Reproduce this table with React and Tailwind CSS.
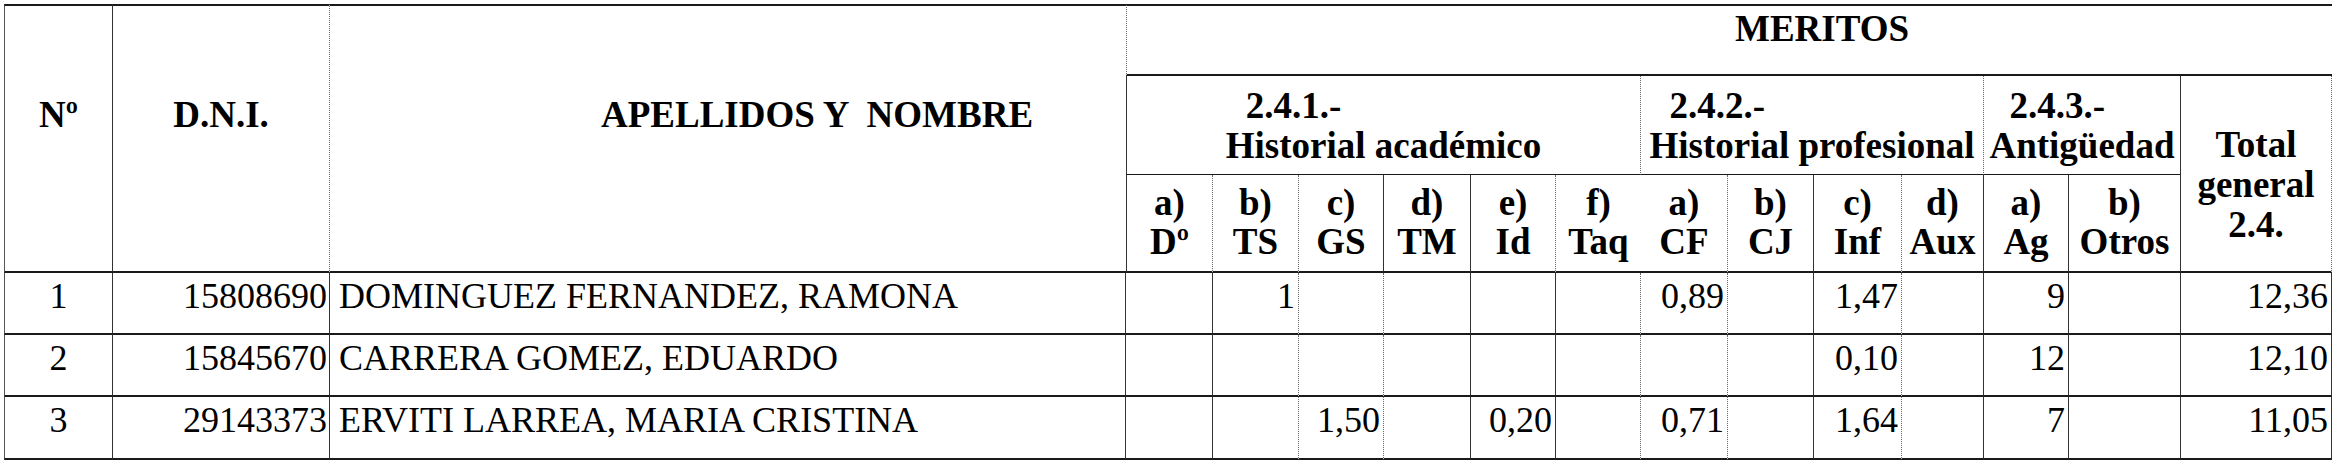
import React from "react";

const R_SOLID = "border-r border-r-[#333]";
const R_DOT = "border-r border-r-[#666] [border-right-style:dotted]";
const B_SOLID = "border-b-2 border-b-[#1a1a1a]";
const T_SOLID = "border-t-2 border-t-[#1a1a1a]";

const subHeads = [
  ["a)", "Dº", R_DOT],
  ["b)", "TS", R_DOT],
  ["c)", "GS", R_SOLID],
  ["d)", "TM", R_SOLID],
  ["e)", "Id", R_DOT],
  ["f)", "Taq", ""],
  ["a)", "CF", R_DOT],
  ["b)", "CJ", R_SOLID],
  ["c)", "Inf", R_DOT],
  ["d)", "Aux", R_SOLID],
  ["a)", "Ag", R_SOLID],
  ["b)", "Otros", R_SOLID],
];

const rowBorders = [
  R_SOLID,
  R_DOT,
  R_DOT,
  R_SOLID,
  R_SOLID,
  R_DOT,
  R_DOT,
  R_SOLID,
  R_DOT,
  R_SOLID,
  R_SOLID,
  R_SOLID,
  R_SOLID,
];

const rows = [
  {
    n: "1",
    dni: "15808690",
    name: "DOMINGUEZ FERNANDEZ, RAMONA",
    v: ["", "1", "", "", "", "", "0,89", "", "1,47", "", "9", "", "12,36"],
  },
  {
    n: "2",
    dni: "15845670",
    name: "CARRERA GOMEZ, EDUARDO",
    v: ["", "", "", "", "", "", "", "", "0,10", "", "12", "", "12,10"],
  },
  {
    n: "3",
    dni: "29143373",
    name: "ERVITI LARREA, MARIA CRISTINA",
    v: ["", "", "1,50", "", "0,20", "", "0,71", "", "1,64", "", "7", "", "11,05"],
  },
];

function GroupHead({ code, title }) {
  return (
    <div className="inline-block text-left leading-[40px]">
      <div className="pl-[20px]">{code}</div>
      <div className="whitespace-nowrap">{title}</div>
    </div>
  );
}

export default function App() {
  return (
    <div className="w-[2334px] h-[462px] bg-white text-black overflow-hidden font-['Liberation_Serif','Times_New_Roman',serif]">
      <div className="pt-[4px] pl-[4px]">
        <div className="grid grid-cols-[109px_217px_796px_87px_86px_85px_87px_85px_85px_87px_86px_88px_82px_85px_112px_151px] grid-rows-[72px_99px_98px_62px_62px_63px]">
          <div className={`col-[1/2] row-[1/4] ${T_SOLID} ${B_SOLID} border-l border-l-[#555] ${R_SOLID} flex justify-center pt-[90px] font-bold text-[37px] leading-none`}>
            Nº
          </div>
          <div className={`col-[2/3] row-[1/4] ${T_SOLID} ${B_SOLID} ${R_DOT} flex justify-center pt-[90px] font-bold text-[37px] leading-none`}>
            D.N.I.
          </div>
          <div className={`col-[3/4] row-[1/4] ${T_SOLID} ${B_SOLID} pl-[271px] pt-[90px] font-bold text-[37px] leading-none whitespace-pre`}>
            {"APELLIDOS Y  NOMBRE"}
          </div>
          <div className={`col-[4/17] row-[1/2] ${T_SOLID} ${B_SOLID} border-l border-l-[#666] [border-left-style:dotted] pl-[608px] pt-[4px] font-bold text-[37px] leading-none`}>
            MERITOS
          </div>
          <div className={`col-[4/10] row-[2/3] border-l border-l-[#333] ${R_DOT} border-b border-b-[#1a1a1a] flex justify-center pt-[10px] font-bold text-[37px]`}>
            <GroupHead code="2.4.1.-" title="Historial académico" />
          </div>
          <div className={`col-[10/14] row-[2/3] ${R_DOT} border-b border-b-[#1a1a1a] flex justify-center pt-[10px] font-bold text-[37px]`}>
            <GroupHead code="2.4.2.-" title="Historial profesional" />
          </div>
          <div className={`col-[14/16] row-[2/3] ${R_SOLID} border-b border-b-[#1a1a1a] flex justify-center pt-[10px] font-bold text-[37px]`}>
            <GroupHead code="2.4.3.-" title="Antigüedad" />
          </div>
          <div className={`col-[16/17] row-[2/4] ${R_DOT} ${B_SOLID} flex flex-col items-center pt-[49px] font-bold text-[37px] leading-[40px]`}>
            <div>Total</div>
            <div>general</div>
            <div>2.4.</div>
          </div>
          {subHeads.map(([a, b, rb], i) => (
            <div
              key={"sh" + i}
              className={`row-[3/4] ${i === 0 ? "border-l border-l-[#333]" : ""} ${rb} ${B_SOLID} flex flex-col items-center pt-[8px] font-bold text-[37px] leading-[39px]`}
            >
              <div>{a}</div>
              <div>{b}</div>
            </div>
          ))}
          {rows.map((r, ri) => (
            <React.Fragment key={"r" + ri}>
              <div className={`border-l border-l-[#555] ${R_SOLID} ${B_SOLID} flex justify-center pt-[5px] text-[36px] leading-none`}>
                {r.n}
              </div>
              <div className={`${R_SOLID} ${B_SOLID} flex justify-end pr-[2px] pt-[5px] text-[36px] leading-none`}>
                {r.dni}
              </div>
              <div className={`${R_SOLID} ${B_SOLID} pl-[9px] pt-[5px] text-[36px] leading-none whitespace-nowrap`}>
                {r.name}
              </div>
              {r.v.map((val, ci) => (
                <div
                  key={"c" + ci}
                  className={`${rowBorders[ci]} ${B_SOLID} flex justify-end pr-[3px] pt-[5px] text-[36px] leading-none`}
                >
                  {val}
                </div>
              ))}
            </React.Fragment>
          ))}
        </div>
      </div>
    </div>
  );
}
